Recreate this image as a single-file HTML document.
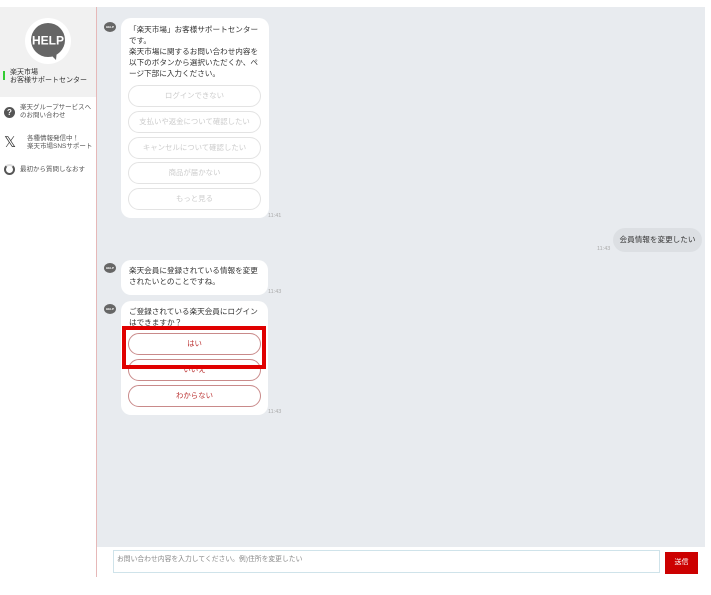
<!DOCTYPE html>
<html><head><meta charset="utf-8"><style>
*{box-sizing:border-box;margin:0;padding:0}
body{width:711px;height:595px;background:#fff;position:relative;overflow:hidden;font-family:"Liberation Sans","Noto Sans CJK JP",sans-serif;color:#333}
.a{position:absolute}
.sidetop{left:0;top:7px;width:96px;height:90px;background:#f1f1f1}
.div{left:96px;top:7px;width:1px;height:570px;background:#e6b8b8}
.chat{left:97px;top:7px;width:608px;height:540px;background:#e8ebef}
.bub{background:#fff;border-radius:10px;font-size:7.6px;line-height:11px;color:#333}
.btn{position:absolute;left:7px;width:133px;height:22px;border-radius:11px;border:1px solid #e3e3e3;text-align:center;line-height:20px;font-size:7.4px;color:#ccc;background:#fff}
.btn.r{border-color:#c98a8a;color:#b33}
.t{font-size:5.5px;color:#aaa}
.ic{width:12px;height:10px;background:#666;border-radius:50%;color:#fff;font-size:3px;text-align:center;line-height:10px;font-weight:bold}
.st{font-size:6.5px;color:#555;line-height:8px}
</style></head><body>
<div class="a sidetop"></div>
<div class="a div"></div>
<div class="a chat"></div>
<div class="a" style="left:25px;top:18px;width:46px;height:46px;border-radius:50%;background:#fff"></div>
<svg class="a" style="left:28px;top:21px" width="40" height="40" viewBox="0 0 40 40"><circle cx="20" cy="19" r="17" fill="#666"/><path d="M21 32 L28 39 L29 29Z" fill="#666"/><text x="20" y="23.5" font-size="12" font-weight="bold" fill="#fff" text-anchor="middle" font-family="Liberation Sans">HELP</text></svg>
<div class="a" style="left:3px;top:71px;width:2px;height:9px;background:#3c3"></div>
<div class="a st" style="left:10px;top:69px;color:#333;font-size:7px">楽天市場<br>お客様サポートセンター</div>
<div class="a" style="left:4px;top:107px;width:11px;height:11px;border-radius:50%;background:#555;color:#fff;font-size:8px;text-align:center;line-height:11px;font-weight:bold">?</div>
<div class="a st" style="left:20px;top:104px">楽天グループサービスへ<br>のお問い合わせ</div>
<div class="a" style="left:4px;top:135px;font-size:15px;color:#333;line-height:15px">𝕏</div>
<div class="a st" style="left:27px;top:135px">各種情報発信中！<br>楽天市場SNSサポート</div>
<div class="a" style="left:4px;top:164px;width:11px;height:11px;border-radius:50%;border:2px solid #555;border-top-color:#ddd"></div>
<div class="a st" style="left:20px;top:166px">最初から質問しなおす</div>

<div class="a ic" style="left:104px;top:22px">HELP</div>
<div class="a bub" style="left:121px;top:18px;width:148px;height:200px;padding:6px 8px">「楽天市場」お客様サポートセンターです。<br>楽天市場に関するお問い合わせ内容を以下のボタンから選択いただくか、ページ下部に入力ください。
<div class="btn" style="top:67px">ログインできない</div>
<div class="btn" style="top:93px">支払いや返金について確認したい</div>
<div class="btn" style="top:119px">キャンセルについて確認したい</div>
<div class="btn" style="top:144px">商品が届かない</div>
<div class="btn" style="top:170px">もっと見る</div>
</div>
<div class="a t" style="left:268px;top:213px">11:41</div>

<div class="a bub" style="left:613px;top:228px;width:89px;height:24px;background:#dcdfe3;border-radius:12px;text-align:center;line-height:24px;font-size:7.6px">会員情報を変更したい</div>
<div class="a t" style="left:597px;top:246px">11:43</div>

<div class="a ic" style="left:104px;top:263px">HELP</div>
<div class="a bub" style="left:121px;top:260px;width:147px;height:35px;padding:5px 8px">楽天会員に登録されている情報を変更されたいとのことですね。</div>
<div class="a t" style="left:268px;top:289px">11:43</div>

<div class="a ic" style="left:104px;top:304px">HELP</div>
<div class="a bub" style="left:121px;top:301px;width:147px;height:114px;padding:5px 8px">ご登録されている楽天会員にログインはできますか？
<div class="btn r" style="top:32px">はい</div>
<div class="btn r" style="top:58px">いいえ</div>
<div class="btn r" style="top:84px">わからない</div>
</div>
<div class="a t" style="left:268px;top:409px">11:43</div>
<div class="a" style="left:122px;top:326px;width:144px;height:43px;border:4px solid #e00000"></div>

<div class="a" style="left:113px;top:550px;width:547px;height:23px;border:1px solid #cfe3ea;font-size:6.8px;color:#888;padding:2px 3px">お問い合わせ内容を入力してください。例)住所を変更したい</div>
<div class="a" style="left:665px;top:552px;width:33px;height:22px;background:#c00;color:#fff;font-size:7px;text-align:center;line-height:22px">送信</div>
</body></html>
